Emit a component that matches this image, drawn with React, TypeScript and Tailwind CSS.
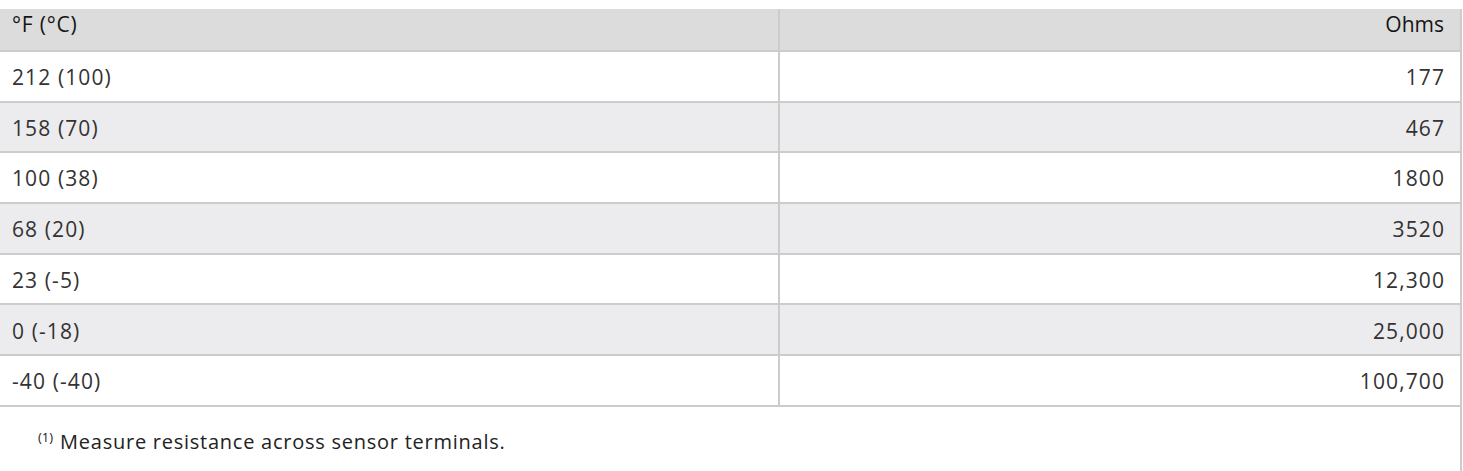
import React from "react";

const rows: [string, string][] = [
  ["212 (100)", "177"],
  ["158 (70)", "467"],
  ["100 (38)", "1800"],
  ["68 (20)", "3520"],
  ["23 (-5)", "12,300"],
  ["0 (-18)", "25,000"],
  ["-40 (-40)", "100,700"],
];

export default function App() {
  return (
    <div
      className="w-[1463px] h-[471px] bg-white overflow-hidden pt-[9px]"
      style={{ fontFamily: '"Open Sans", "Noto Sans", sans-serif' }}
    >
      <div className="w-[1462px] border-r-2 border-[#cccccc]">
        <div className="grid grid-cols-[780px_1fr] h-[43px] bg-[#dcdcdc] border-b-2 border-[#cccccc] text-[21px] text-[#151515]">
          <div className="border-r-2 border-[#cccccc] pl-[12px] pt-[1px] leading-[28px] tracking-[0.8px]">°F (°C)</div>
          <div className="text-right pr-[16px] pt-[1px] leading-[28px]">Ohms</div>
        </div>
        {rows.map(([a, b], i) => (
          <div
            key={i}
            className={`grid grid-cols-[780px_1fr] h-[50.7px] border-b-2 border-[#cccccc] text-[21px] text-[#333333] tracking-[1.1px] ${
              i % 2 === 1 ? "bg-[#ececee]" : "bg-white"
            }`}
          >
            <div className="border-r-2 border-[#cccccc] pl-[12px] pt-[3px] flex items-center">{a}</div>
            <div className="flex items-center justify-end pr-[15px] pt-[3px]">{b}</div>
          </div>
        ))}
        <div className="h-[80px] pl-[38px] pt-[20px] text-[20px] text-[#222222] tracking-[0.75px]">
          <sup className="text-[13px] mr-[7px] tracking-normal">(1)</sup>Measure resistance across sensor terminals.
        </div>
      </div>
    </div>
  );
}
